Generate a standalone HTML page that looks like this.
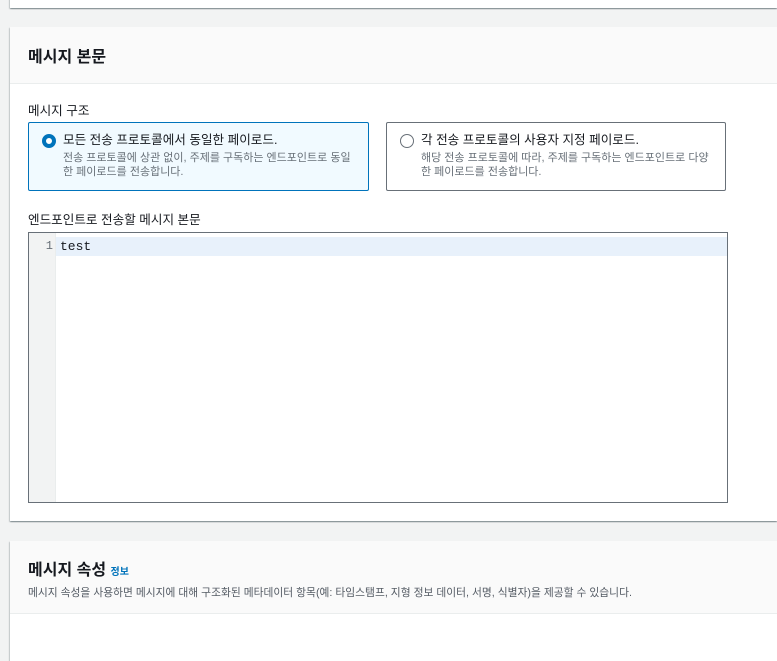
<!DOCTYPE html>
<html><head><meta charset="utf-8"><style>
*{box-sizing:border-box;margin:0;padding:0}
body{width:777px;height:628px;overflow:hidden;background:#f2f3f3;font-family:"Liberation Sans","Noto Sans CJK KR",sans-serif;color:#16191f;position:relative}
.card{position:absolute;left:10px;right:0;background:#fff;box-shadow:0 1px 1px 0 rgba(0,28,36,.3),1px 1px 1px 0 rgba(0,28,36,.15),-1px 1px 1px 0 rgba(0,28,36,.15)}
.hdr{background:#fafafa;border-bottom:1px solid #eaeded;padding:0 18px}
.abs{position:absolute}
.tile{position:absolute;height:69px;border:1px solid #687078;border-radius:2px;padding:9px 0 0 34px;white-space:nowrap}
.tile .t{font-size:12.6px;line-height:17px}
.tile .d{font-size:11px;color:#687078;line-height:14px;margin-top:2px}
.radio{position:absolute;left:13px;top:11px;width:14px;height:14px;border-radius:50%}
</style></head><body>
<div class="card" style="top:-10px;height:18px"></div>
<div class="card" style="top:27px;height:494px">
  <div class="hdr" style="height:57px"><div style="font-size:16px;font-weight:bold;padding-top:16px">메시지 본문</div></div>
  <div class="abs" style="left:18px;top:73px;font-size:12.6px">메시지 구조</div>
  <div class="tile" style="left:18px;width:341px;top:95px;border:1px solid #0073bb;background:#f1faff">
    <div class="radio" style="border:4px solid #0073bb;background:#fff"></div>
    <div class="t">모든 전송 프로토콜에서 동일한 페이로드.</div>
    <div class="d">전송 프로토콜에 상관 없이, 주제를 구독하는 엔드포인트로 동일<br>한 페이로드를 전송합니다.</div>
  </div>
  <div class="tile" style="left:376px;width:340px;top:95px">
    <div class="radio" style="border:1px solid #687078;background:#fff"></div>
    <div class="t">각 전송 프로토콜의 사용자 지정 페이로드.</div>
    <div class="d">해당 전송 프로토콜에 따라, 주제를 구독하는 엔드포인트로 다양<br>한 페이로드를 전송합니다.</div>
  </div>
  <div class="abs" style="left:18px;top:182px;font-size:12.6px">엔드포인트로 전송할 메시지 본문</div>
  <div class="abs" style="left:18px;top:205px;width:700px;height:271px;border:1px solid #687078;background:#fff">
    <div class="abs" style="left:0;top:0;width:27px;height:100%;background:#f2f3f3;border-right:1px solid #eaeded"></div>
    <div class="abs" style="left:27px;top:4px;right:0;height:19px;background:#e8f1fb"></div>
    <div class="abs" style="left:0;top:6px;width:24px;text-align:right;font-family:'Liberation Mono',monospace;font-size:12px;color:#687078">1</div>
    <div class="abs" style="left:31px;top:6px;font-family:'Liberation Mono',monospace;font-size:13px">test</div>
  </div>
</div>
<div class="card" style="top:541px;height:120px">
  <div class="hdr" style="height:73px">
    <div style="padding-top:15px;font-size:16px;font-weight:bold">메시지 속성 <span style="font-size:10px;color:#0073bb;font-weight:bold">정보</span></div>
    <div style="font-size:10.75px;color:#545b64;margin-top:5px;white-space:nowrap">메시지 속성을 사용하면 메시지에 대해 구조화된 메타데이터 항목(예: 타임스탬프, 지형 정보 데이터, 서명, 식별자)을 제공할 수 있습니다.</div>
  </div>
</div>
</body></html>
